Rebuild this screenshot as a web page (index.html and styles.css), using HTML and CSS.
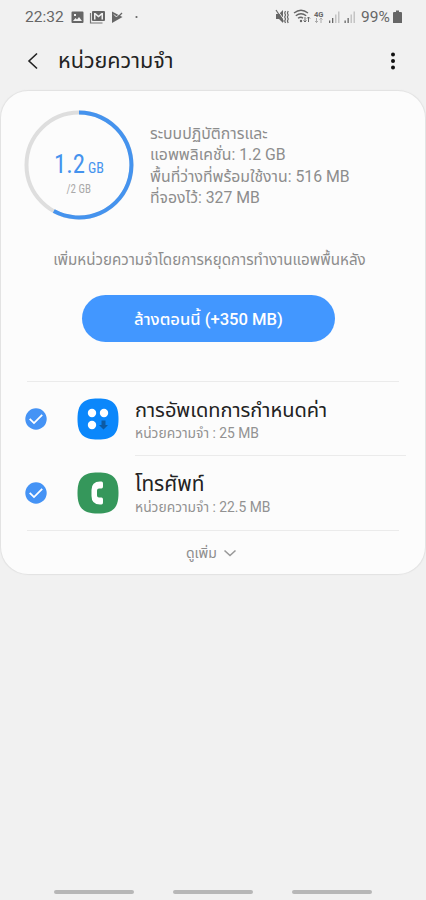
FILE: index.html
```html
<!DOCTYPE html>
<html lang="th">
<head>
<meta charset="utf-8">
<title>หน่วยความจำ</title>
<link rel="stylesheet" href="styles.css">
</head>
<body>
<header class="status">
  <span class="clock">22:32</span>
  <svg class="status-left" width="70" height="16" viewBox="0 0 70 16">
    <path fill="#666" fill-rule="evenodd" d="M2.500 2.500h10q1 0 1 1v9.500q0 1-1 1h-10q-1 0-1-1V3.500q0-1 1-1zM3 12h9L9 8 7 10.500 5.500 9zM4 5v2h2V5z"/>
    <path fill="#666" fill-rule="evenodd" d="M23 2h11q1 0 1 1v8q0 1-1 1H23q-1 0-1-1V3q0-1 1-1zM24 10.500h1.500V6L28.500 8.500 31.500 6v4.500H33V4h-1.500L28.500 6.500 25.500 4H24z"/>
    <path fill="none" stroke="#777" stroke-width="1.200" d="M20.500 4v10h12"/>
    <path fill="#666" d="M42 2.500l10.500 5.500L42 14z"/>
    <path fill="none" stroke="#f1f1f1" stroke-width="1" d="M44 5.500l2.500 2.500 5-5"/>
    <path fill="none" stroke="#666" stroke-width="1.300" d="M47.500 8.500l4.500-4.500"/>
    <circle cx="66.500" cy="8" r="1.100" fill="#666"/>
  </svg>
  <svg class="status-right" width="82" height="18" viewBox="0 0 82 18">
    <path fill="#666" d="M1 6h3l4-4v13l-4-4H1z"/>
    <path stroke="#f1f1f1" stroke-width="1" d="M2.500 2.500l6 8.500"/>
    <path stroke="#666" stroke-width="1.200" d="M1 2l7.500 11.500"/>
    <path fill="none" stroke="#666" stroke-width="1.200" d="M10.500 3l-.8 2 .8 2-.8 2 .8 2-.8 2 .8 2M13.200 3l-.8 2 .8 2-.8 2 .8 2-.8 2 .8 2"/>
    <g fill="none" stroke="#666" stroke-width="1.400"><path d="M19 5q7-5.500 14 0M20.800 7.800q5.200-4 10.400 0M23 10.300q3-2.300 5 0"/></g>
    <circle cx="26" cy="13" r="1.200" fill="#666"/>
    <path stroke="#666" fill="none" d="M30 9v5M28.500 12.500l1.500 1.500 1.500-1.500M33.500 14V9M32 10.500L33.500 9l1.500 1.500"/>
    <text class="network" x="39" y="8.500" textLength="9.500" lengthAdjust="spacingAndGlyphs">4G</text>
    <path stroke="#aaa" fill="none" d="M41.500 10v5M40 13l1.500 1.500L43 13M46 15v-5M44.500 11.500L46 10l1.500 1.500"/>
    <path fill="#666" d="M54 12.500h1.300V15H54zM57 10h1.300v5H57zM69.500 12.500h1.300V15h-1.300zM72.500 10h1.300v5h-1.300z"/>
    <path fill="#c4c4c4" d="M60 6.500h1.500V15H60zM63 3.500h1.500V15H63zM75.500 6.500H77V15h-1.500zM78.500 3.500H80V15h-1.500z"/>
  </svg>
  <span class="battery-text">99%</span>
  <svg width="10" height="16" viewBox="0 0 10 16"><path fill="#666" d="M3 1.500h3V3h2q1 0 1 1v10H0V4q0-1 1-1h2z"/></svg>
</header>
<div class="appbar">
  <svg width="14" height="20" viewBox="0 0 14 20"><path fill="none" stroke="#222" stroke-width="1.600" d="M12 2.500L4 10l8 7.500"/></svg>
  <h1>หน่วยความจำ</h1>
  <svg class="more" width="6" height="20" viewBox="0 0 6 20"><g fill="#111"><circle cx="3" cy="3.500" r="2"/><circle cx="3" cy="10" r="2"/><circle cx="3" cy="16.500" r="2"/></g></svg>
</div>
<main class="card">
  <section class="summary">
    <svg class="gauge" width="110" height="110" viewBox="0 0 110 110">
      <circle cx="55" cy="55" r="52.500" fill="none" stroke="#dedede" stroke-width="4"/>
      <path d="M55 2.500A52.500 52.500 0 1 1 29.800 101.100" fill="none" stroke="#4593ee" stroke-width="4"/>
      <text class="used" x="30" y="63" textLength="31" lengthAdjust="spacingAndGlyphs">1.2</text>
      <text class="unit" x="64" y="63" textLength="16" lengthAdjust="spacingAndGlyphs">GB</text>
      <text class="total" x="42.500" y="83" textLength="24.500" lengthAdjust="spacingAndGlyphs">/2 GB</text>
    </svg>
    <p class="details">ระบบปฏิบัติการและ<br>แอพพลิเคชั่น: 1.2 GB<br>พื้นที่ว่างที่พร้อมใช้งาน: 516 MB<br>ที่จองไว้: 327 MB</p>
  </section>
  <p class="hint">เพิ่มหน่วยความจำโดยการหยุดการทำงานแอพพื้นหลัง</p>
  <button class="clean">ล้างตอนนี้ (+350 MB)</button>
  <ul class="apps">
    <li class="app">
      <svg class="check" width="22" height="22" viewBox="0 0 22 22"><circle cx="11" cy="11" r="10.700" fill="#4593f5"/><path d="M4.700 10.800l4.300 4.300 8.200-8.200" fill="none" stroke="#fff" stroke-width="1.800"/></svg>
      <svg class="icon" width="42" height="42" viewBox="0 0 42 42"><path fill="#0b87fb" d="M21 .5C36 .5 41.500 6 41.500 21S36 41.500 21 41.500.5 36 .5 21 6 .5 21 .5z"/><g fill="#fff"><circle cx="15" cy="15" r="4.200"/><circle cx="27" cy="15" r="4.200"/><circle cx="15" cy="27" r="4.200"/></g><path fill="#0c5aa4" d="M24.500 22.500h4v4.500H31l-4.500 4.500L22 27h2.500z"/></svg>
      <div class="label"><h2>การอัพเดทการกำหนดค่า</h2><p>หน่วยความจำ : 25 MB</p></div>
    </li>
    <li class="app">
      <svg class="check" width="22" height="22" viewBox="0 0 22 22"><circle cx="11" cy="11" r="10.700" fill="#4593f5"/><path d="M4.700 10.800l4.300 4.300 8.200-8.200" fill="none" stroke="#fff" stroke-width="1.800"/></svg>
      <svg class="icon" width="42" height="42" viewBox="0 0 42 42"><path fill="#35975b" d="M21 .5C36 .5 41.500 6 41.500 21S36 41.500 21 41.500.5 36 .5 21 6 .5 21 .5z"/><path fill="#fff" d="M23 9.500h1.500q1.500 0 1.500 2v3q0 2-1.500 2h-2.500q-2 0-2 2v5q0 2 2 2h2.500q1.500 0 1.500 2v3q0 2-1.500 2H23q-8.500 0-8.500-8.500v-6q0-8.500 8.500-8.500z"/></svg>
      <div class="label"><h2 class="wide">โทรศัพท์</h2><p>หน่วยความจำ : 22.5 MB</p></div>
    </li>
  </ul>
  <div class="view-more"><span>ดูเพิ่ม</span><svg width="14" height="10" viewBox="0 0 14 10"><path fill="none" stroke="#999" stroke-width="1.600" d="M1.500 2.500L7 7.500l5.500-5"/></svg></div>
</main>
<nav class="nav"><i></i><i></i><i></i></nav>
</body>
</html>
```
FILE: styles.css
```css
* { box-sizing: border-box; margin: 0; padding: 0; }
body { width: 426px; height: 900px; overflow: hidden; display: flex; flex-direction: column; background: #f1f1f1; color: #222; font-family: Roboto, "Noto Sans Thai", "Noto Sans", sans-serif; }
svg { display: block; flex: none; }
.status { height: 33px; padding: 0 23px 0 25px; display: flex; align-items: center; color: #666; font-size: 15.500px; white-space: nowrap; }
.clock { width: 45px; }
.status-right { margin-left: auto; margin-right: 4px; }
.battery-text { width: 32px; }
.network { font: bold 7.500px Roboto, sans-serif; fill: #666; }
.appbar { height: 58px; padding: 0 30px 2px 25px; display: flex; align-items: center; }
.appbar h1 { margin-left: 19px; font-size: 21.600px; font-weight: 400; line-height: 30px; white-space: nowrap; }
.more { margin-left: auto; }
.card { width: 424px; height: 483px; margin: 0 1px; border-radius: 27px; background: #fcfcfc; box-shadow: 0 0 1px 1px #e2e2e2; }
.summary { height: 149px; padding: 19px 0 0 23px; display: flex; align-items: flex-start; }
.gauge text { font-family: "Roboto Condensed", Roboto, sans-serif; fill: #4593ee; }
.gauge .used { font-size: 26px; }
.gauge .unit { font-size: 15px; }
.gauge .total { font-size: 12px; fill: #aaa; }
.details { margin: 13px 0 0 16px; font-size: 15.800px; line-height: 21.300px; color: #8d8d8d; white-space: nowrap; }
.hint { height: 40px; line-height: 40px; text-align: center; color: #8d8d8d; font-size: 15.150px; white-space: nowrap; padding-right: 7px; }
.clean { display: block; width: 253px; height: 47px; margin: 15px 0 0 81px; padding-top: 1px; border: 0; border-radius: 24px; background: #4297ff; color: #fff; font: 500 16.600px Roboto, "Noto Sans Thai", sans-serif; white-space: nowrap; }
.apps { list-style: none; margin-top: 39px; }
.app { height: 74px; display: flex; align-items: center; margin-left: 24px; }
.apps::before { content: ""; display: block; height: 1px; width: 372px; margin-left: 26px; background: #ebebeb; }
.icon { margin-left: 30px; }
.label { width: 271px; height: 74px; margin-left: 16px; padding-top: 14px; white-space: nowrap; }
.app:first-child .label { border-bottom: 1px solid #ebebeb; }
.label h2 { font-size: 20px; line-height: 29px; font-weight: 400; }
.label .wide { font-size: 20.800px; }
.label p { font-size: 13.850px; line-height: 16px; color: #929292; }
.view-more { display: flex; align-items: center; gap: 6px; width: 372px; height: 45px; margin-left: 26px; padding-left: 159px; border-top: 1px solid #ebebeb; font-size: 14px; color: #8d8d8d; }
.nav { margin-top: auto; height: 10px; display: flex; justify-content: center; gap: 39px; }
.nav i { width: 80px; height: 4px; border-radius: 2px; background: #b7b7b7; }
```
